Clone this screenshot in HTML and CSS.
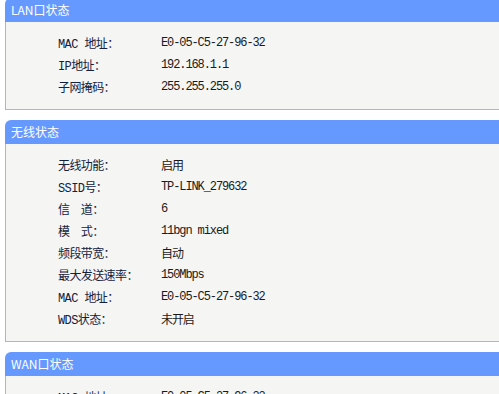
FILE: index.html
```html
<!DOCTYPE html>
<html lang="zh-CN">
<head>
  <meta charset="UTF-8">
  <meta name="viewport" content="width=device-width, initial-scale=1.0">
  <title>运行状态</title>
  <link rel="stylesheet" href="styles.css">
</head>
<body>
  <div class="panel">
    <div class="panel-head">LAN口状态</div>
    <div class="panel-body">
      <div class="row"><span class="label">MAC 地址：</span><span class="value">E0-05-C5-27-96-32</span></div>
      <div class="row"><span class="label">IP地址：</span><span class="value">192.168.1.1</span></div>
      <div class="row"><span class="label">子网掩码：</span><span class="value">255.255.255.0</span></div>
    </div>
  </div>

  <div class="panel">
    <div class="panel-head">无线状态</div>
    <div class="panel-body">
      <div class="row"><span class="label">无线功能：</span><span class="value">启用</span></div>
      <div class="row"><span class="label">SSID号：</span><span class="value">TP-LINK_279632</span></div>
      <div class="row"><span class="label">信　道：</span><span class="value">6</span></div>
      <div class="row"><span class="label">模　式：</span><span class="value">11bgn mixed</span></div>
      <div class="row"><span class="label">频段带宽：</span><span class="value">自动</span></div>
      <div class="row"><span class="label">最大发送速率：</span><span class="value">150Mbps</span></div>
      <div class="row"><span class="label">MAC 地址：</span><span class="value">E0-05-C5-27-96-32</span></div>
      <div class="row"><span class="label">WDS状态：</span><span class="value">未开启</span></div>
    </div>
  </div>

  <div class="panel">
    <div class="panel-head">WAN口状态</div>
    <div class="panel-body">
      <div class="row"><span class="label">MAC 地址：</span><span class="value">E0-05-C5-27-96-33</span></div>
    </div>
  </div>
</body>
</html>
```

FILE: styles.css
```css
* {
  margin: 0;
  padding: 0;
  box-sizing: border-box;
}

body {
  font-family: 'Liberation Mono', 'Noto Sans CJK SC', monospace;
  font-size: 12px;
  background-color: #ffffff;
  color: #1e2a40;
  overflow: hidden;
}

.panel {
  width: 520px;
  margin-left: 5px;
  margin-bottom: 10px;
}

.panel:first-child {
  margin-top: -2px;
}

.panel-head {
  height: 24px;
  line-height: 24px;
  padding-left: 6px;
  background: #6699ff;
  color: #ffffff;
  border-top-left-radius: 6px;
  font-family: 'Noto Sans CJK SC', sans-serif;
  font-size: 12px;
}

.panel-body {
  background: #f5f5f4;
  border-left: 1px solid #d4b07c;
  border-bottom: 1px solid #d4b07c;
  padding: 10px 0 11px 52px;
}

.row {
  display: flex;
  height: 22px;
  align-items: center;
}

.label {
  width: 103px;
  font-size: 12px;
  letter-spacing: -0.6px;
  color: #14213d;
}

.value {
  font-size: 12px;
  letter-spacing: -1.1px;
  color: #1a1a1a;
}
```
